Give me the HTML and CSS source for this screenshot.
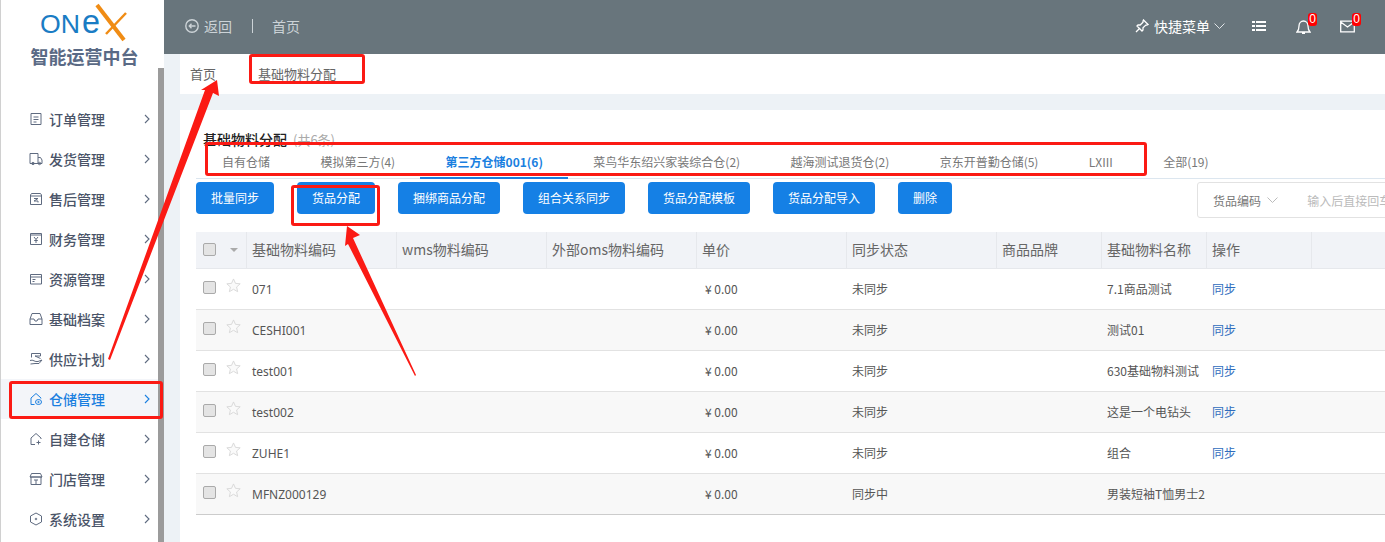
FILE: index.html
```html
<!DOCTYPE html>
<html lang="zh-CN">
<head>
<meta charset="utf-8">
<title>基础物料分配</title>
<link rel="stylesheet" href="styles.css">
</head>
<body>
<div class="app">
  <aside class="sidebar">
    <div class="side-main">
      <div class="brand">
        <svg class="logo" width="100" height="38" viewBox="0 0 100 38">
          <text x="0" y="29" class="logo-text" textLength="40" lengthAdjust="spacingAndGlyphs">ON</text>
          <text x="42" y="29" class="logo-text logo-e" textLength="18" lengthAdjust="spacingAndGlyphs">e</text>
          <path d="M57 1 L84 36" stroke="#f08c14" stroke-width="4" fill="none"/>
          <path d="M86 9 L66 30" stroke="#f08c14" stroke-width="2.500" fill="none"/>
        </svg>
        <div class="brand-name">智能运营中台</div>
      </div>
      <nav class="nav">
        <a class="nav-item"><svg class="ni" viewBox="0 0 14 14"><path d="M2 1.500h10v11H2zM4.500 5h5M4.500 7.500h5M4.500 10h3"/></svg><span>订单管理</span><svg class="chev" viewBox="0 0 6 10"><path d="M1 1l4 4-4 4"/></svg></a>
        <a class="nav-item"><svg class="ni" viewBox="0 0 14 14"><path d="M1 1.500h8v10H1zM9 5.500h2.500l1.500 2.500v3.500H9"/><circle cx="4" cy="11.500" r="1.200"/><circle cx="10.500" cy="11.500" r="1.200"/></svg><span>发货管理</span><svg class="chev" viewBox="0 0 6 10"><path d="M1 1l4 4-4 4"/></svg></a>
        <a class="nav-item"><svg class="ni" viewBox="0 0 14 14"><path d="M1.500 3l1-1.500h9l1 1.500v9.500h-11zM1.500 4h11M5 6.500h4L5 9h4v1.500"/></svg><span>售后管理</span><svg class="chev" viewBox="0 0 6 10"><path d="M1 1l4 4-4 4"/></svg></a>
        <a class="nav-item"><svg class="ni" viewBox="0 0 14 14"><path d="M1.500 1.500h11v11h-11zM1.500 3h11M5 5l2 2.500L9 5M7 7.500V11M5.200 8.500h3.600"/></svg><span>财务管理</span><svg class="chev" viewBox="0 0 6 10"><path d="M1 1l4 4-4 4"/></svg></a>
        <a class="nav-item"><svg class="ni" viewBox="0 0 14 14"><path d="M1.500 2.500h11v9.500h-11zM1.500 5h11M3.500 7.500h3M3.500 9.500h2"/></svg><span>资源管理</span><svg class="chev" viewBox="0 0 6 10"><path d="M1 1l4 4-4 4"/></svg></a>
        <a class="nav-item"><svg class="ni" viewBox="0 0 14 14"><path d="M1 7l2-5.500h8L13 7v5.500H1zM1 7h4l1 2h2l1-2h4"/></svg><span>基础档案</span><svg class="chev" viewBox="0 0 6 10"><path d="M1 1l4 4-4 4"/></svg></a>
        <a class="nav-item"><svg class="ni" viewBox="0 0 14 14"><path d="M2.500 5.500v-4h9V4H6l5.500 2.500M1 8.500c3-1.500 5 2 8 1l4-1.500-3 3.500H6L1.500 12"/></svg><span>供应计划</span><svg class="chev" viewBox="0 0 6 10"><path d="M1 1l4 4-4 4"/></svg></a>
        <a class="nav-item active"><svg class="ni" viewBox="0 0 14 14"><path d="M5.500 12.500H2V6L7 1.500 12 6v.5"/><ellipse cx="9.500" cy="10" rx="3" ry="2.500"/><circle cx="9.500" cy="10" r=".7"/></svg><span>仓储管理</span><svg class="chev" viewBox="0 0 6 10"><path d="M1 1l4 4-4 4"/></svg></a>
        <a class="nav-item"><svg class="ni" viewBox="0 0 14 14"><path d="M6 12.500H2V6L7 1.500 12 6v1M9.500 8.500v4M7.500 10.500h4"/></svg><span>自建仓储</span><svg class="chev" viewBox="0 0 6 10"><path d="M1 1l4 4-4 4"/></svg></a>
        <a class="nav-item"><svg class="ni" viewBox="0 0 14 14"><path d="M2 5v7.500h10V5M2.500 1.500h9L13 5H1zM1 5h12M5 8h4M7 8v4.500"/></svg><span>门店管理</span><svg class="chev" viewBox="0 0 6 10"><path d="M1 1l4 4-4 4"/></svg></a>
        <a class="nav-item"><svg class="ni" viewBox="0 0 14 14"><path d="M7 1l5.500 3v6L7 13l-5.500-3V4z"/><circle cx="7" cy="7" r=".8"/></svg><span>系统设置</span><svg class="chev" viewBox="0 0 6 10"><path d="M1 1l4 4-4 4"/></svg></a>
      </nav>
    </div>
    <div class="side-scroll"></div>
  </aside>

  <div class="main">
    <header class="topbar">
      <svg class="top-back" viewBox="0 0 14 14"><circle cx="7" cy="7" r="6.200"/><path d="M10.500 7h-6M6.500 4.800L4.300 7l2.200 2.200"/></svg>
      <span class="top-link">返回</span>
      <span class="top-sep"></span>
      <span class="top-link">首页</span>
      <div class="top-right">
        <svg class="ti pin" viewBox="0 0 14 14"><path d="M8.500 1l4.500 4.500-1.200.6-1 0L8 8.800 8 11 7 12 2 7l1-1h2.200L8 3.300V2.200zM4.500 9.500L1 13"/></svg>
        <span class="quick">快捷菜单</span>
        <svg class="ti quick-chev" viewBox="0 0 11 6"><path d="M.5.500l5 5 5-5"/></svg>
        <svg class="ti list" viewBox="0 0 14 12"><path class="solid" d="M0 1h3v2H0zM4 1h10v2H4zM0 5h3v2H0zM4 5h10v2H4zM0 9h3v2H0zM4 9h10v2H4z"/></svg>
        <span class="bell-wrap">
          <svg class="ti bell" viewBox="0 0 15 15"><path d="M1 13h13c-1.500-1.500-2-3-2-6 0-3-2-5-4.500-5S3 4 3 7c0 3-.5 4.500-2 6zM6 14.500h3"/></svg>
          <b class="badge">0</b>
        </span>
        <span class="bell-wrap mail-wrap">
          <svg class="ti mail" viewBox="0 0 15 12"><path d="M.7.700h13.600v10.600H.7zM.7 1.500l6.800 5 6.800-5"/></svg>
          <b class="badge">0</b>
        </span>
      </div>
    </header>

    <div class="pagetabs">
      <span class="pt pt-home">首页</span>
      <span class="pt">基础物料分配</span>
    </div>

    <section class="card">
      <div class="card-head"><strong>基础物料分配</strong><em>(共6条)</em></div>
      <div class="tabs">
        <span class="tab">自有仓储</span>
        <span class="tab">模拟第三方(4)</span>
        <span class="tab current">第三方仓储001(6)</span>
        <span class="tab">菜鸟华东绍兴家装综合仓(2)</span>
        <span class="tab">越海测试退货仓(2)</span>
        <span class="tab">京东开普勤仓储(5)</span>
        <span class="tab">LXIII</span>
        <span class="tab">全部(19)</span>
      </div>
      <div class="toolbar">
        <button class="btn">批量同步</button>
        <button class="btn">货品分配</button>
        <button class="btn">捆绑商品分配</button>
        <button class="btn">组合关系同步</button>
        <button class="btn">货品分配模板</button>
        <button class="btn">货品分配导入</button>
        <button class="btn">删除</button>
        <div class="search">
          <span class="search-key">货品编码</span>
          <svg class="search-chev" viewBox="0 0 11 6"><path d="M.5.500l5 5 5-5"/></svg>
          <span class="search-ph">输入后直接回车</span>
        </div>
      </div>
      <div class="table">
        <div class="tr th">
          <div class="c c-sel"><i class="cb"></i><svg class="sort" viewBox="0 0 8 4"><path d="M0 0h8L4 4z"/></svg></div>
          <div class="c">基础物料编码</div><div class="c">wms物料编码</div><div class="c">外部oms物料编码</div><div class="c">单价</div><div class="c">同步状态</div><div class="c">商品品牌</div><div class="c">基础物料名称</div><div class="c">操作</div><div class="c"></div>
        </div>
        <div class="tr">
          <div class="c c-sel"><i class="cb"></i><svg class="star" viewBox="0 0 16 16"><path d="M8 1l2.100 4.700 5 .5-3.800 3.400 1.100 5L8 12l-4.400 2.600 1.100-5L.9 6.200l5-.5z"/></svg></div>
          <div class="c code">071</div><div class="c"></div><div class="c"></div><div class="c price">¥ 0.00</div><div class="c">未同步</div><div class="c"></div><div class="c">7.1商品测试</div><div class="c link">同步</div><div class="c"></div>
        </div>
        <div class="tr">
          <div class="c c-sel"><i class="cb"></i><svg class="star" viewBox="0 0 16 16"><path d="M8 1l2.100 4.700 5 .5-3.800 3.400 1.100 5L8 12l-4.400 2.600 1.100-5L.9 6.200l5-.5z"/></svg></div>
          <div class="c code">CESHI001</div><div class="c"></div><div class="c"></div><div class="c price">¥ 0.00</div><div class="c">未同步</div><div class="c"></div><div class="c">测试01</div><div class="c link">同步</div><div class="c"></div>
        </div>
        <div class="tr">
          <div class="c c-sel"><i class="cb"></i><svg class="star" viewBox="0 0 16 16"><path d="M8 1l2.100 4.700 5 .5-3.800 3.400 1.100 5L8 12l-4.400 2.600 1.100-5L.9 6.200l5-.5z"/></svg></div>
          <div class="c code">test001</div><div class="c"></div><div class="c"></div><div class="c price">¥ 0.00</div><div class="c">未同步</div><div class="c"></div><div class="c">630基础物料测试</div><div class="c link">同步</div><div class="c"></div>
        </div>
        <div class="tr">
          <div class="c c-sel"><i class="cb"></i><svg class="star" viewBox="0 0 16 16"><path d="M8 1l2.100 4.700 5 .5-3.800 3.400 1.100 5L8 12l-4.400 2.600 1.100-5L.9 6.200l5-.5z"/></svg></div>
          <div class="c code">test002</div><div class="c"></div><div class="c"></div><div class="c price">¥ 0.00</div><div class="c">未同步</div><div class="c"></div><div class="c">这是一个电钻头</div><div class="c link">同步</div><div class="c"></div>
        </div>
        <div class="tr">
          <div class="c c-sel"><i class="cb"></i><svg class="star" viewBox="0 0 16 16"><path d="M8 1l2.100 4.700 5 .5-3.800 3.400 1.100 5L8 12l-4.400 2.600 1.100-5L.9 6.200l5-.5z"/></svg></div>
          <div class="c code">ZUHE1</div><div class="c"></div><div class="c"></div><div class="c price">¥ 0.00</div><div class="c">未同步</div><div class="c"></div><div class="c">组合</div><div class="c link">同步</div><div class="c"></div>
        </div>
        <div class="tr">
          <div class="c c-sel"><i class="cb"></i><svg class="star" viewBox="0 0 16 16"><path d="M8 1l2.100 4.700 5 .5-3.800 3.400 1.100 5L8 12l-4.400 2.600 1.100-5L.9 6.200l5-.5z"/></svg></div>
          <div class="c code">MFNZ000129</div><div class="c"></div><div class="c"></div><div class="c price">¥ 0.00</div><div class="c">同步中</div><div class="c"></div><div class="c nowrap">男装短袖T恤男士2</div><div class="c link"></div><div class="c"></div>
        </div>
      </div>
    </section>
  </div>
</div>

<div class="mark mark-tab"></div>
<div class="mark mark-tabs"></div>
<div class="mark mark-btn"></div>
<div class="mark mark-nav"></div>
<svg class="arrows" width="1385" height="542" viewBox="0 0 1385 542">
  <path d="M217 80 L219 96 L213 93 L110 360 L108 359 L205 90 L201 90 Z"/>
  <path d="M347 226 L360 235 L353 238 L416 375 L415 376 L348 244 L345 246 Z"/>
</svg>
</body>
</html>
```
FILE: styles.css
```css
* { box-sizing: border-box; }
html, body { margin: 0; padding: 0; width: 1385px; height: 542px; overflow: hidden; }
body { font-family: "Noto Sans", "Noto Sans CJK SC", sans-serif; font-size: 12px; color: #555; background: #edf2f6; position: relative; }
.app { display: flex; width: 1385px; height: 542px; }

.sidebar { width: 164px; flex: none; display: flex; background: #fff; border-left: 1px solid #d0d0d0; }
.side-main { flex: 1; min-width: 0; }
.side-scroll { width: 6px; margin-top: 68px; background: #9b9b9b; }
.brand { height: 99px; display: flex; flex-direction: column; align-items: center; padding-top: 4px; }
.logo { display: block; margin-left: 20px; overflow: visible; }
.logo-text { font-family: "Liberation Sans", sans-serif; font-size: 25px; fill: #1a7cc4; }
.logo-e { font-size: 33px; }
.brand-name { font-family: "Noto Sans CJK SC", sans-serif; font-size: 18px; font-weight: 700; line-height: 24px; color: #5a6a85; margin-top: 2px; margin-left: 10px; }
.nav { display: flex; flex-direction: column; }
.nav-item { height: 40px; display: flex; align-items: center; padding-left: 28px; font-family: "Noto Sans CJK SC", sans-serif; font-size: 14px; font-weight: 500; color: #4a5468; }
.nav-item span { width: 56px; margin-left: 6px; white-space: nowrap; }
.ni { width: 14px; height: 14px; fill: none; stroke: #5f6b80; stroke-width: 1; }
.chev { width: 6px; height: 10px; margin-left: 39px; fill: none; stroke: #5f6b80; stroke-width: 1.100; }
.nav-item.active { background: #f3f5f9; color: #1a7fe0; }
.nav-item.active .ni, .nav-item.active .chev { stroke: #1a7fe0; }

.main { flex: 1; min-width: 0; display: flex; flex-direction: column; }
.topbar { height: 54px; flex: none; background: #68757c; display: flex; align-items: center; padding: 0 0 2px 21px; color: #ccd3d7; font-family: "Noto Sans CJK SC", sans-serif; font-size: 14px; }
.top-back { width: 14px; height: 14px; fill: none; stroke: #ccd3d7; stroke-width: 1.400; margin-right: 5px; }
.top-sep { width: 1px; height: 14px; background: #ccd3d7; margin: 0 20px 0 20px; }
.top-link:last-of-type { margin-left: -1px; }
.top-right { margin-left: auto; display: flex; align-items: center; color: #fff; padding-right: 30px; }
.ti { fill: none; stroke: #fff; stroke-width: 1.300; flex: none; }
.pin { width: 14px; height: 14px; margin-right: 5px; }
.quick { width: 56px; white-space: nowrap; }
.quick-chev { width: 11px; height: 6px; margin-left: 4px; margin-right: 27px; stroke: #dfe4e7; stroke-width: 1; }
.list { width: 14px; height: 12px; margin-right: 30px; }
.solid { fill: #fff; stroke: none; }
.bell-wrap { position: relative; display: block; width: 15px; height: 15px; margin-right: 29px; }
.mail-wrap { margin-right: 0; }
.bell { display: block; width: 15px; height: 15px; }
.mail { display: block; width: 15px; height: 13px; margin-top: 1px; }
.badge { position: absolute; left: 12px; top: -6px; width: 9px; height: 13px; background: #f00; border-radius: 3px; color: #fff; font: 400 12px/13px "Liberation Sans", sans-serif; text-align: center; }

.pagetabs { height: 40px; flex: none; margin-left: 16px; background: #fff; display: flex; align-items: center; padding: 0 0 2px 10px; font-family: "Noto Sans CJK SC", sans-serif; font-size: 13px; color: #666; }
.pt-home { margin-right: 42px; }

.card { flex: 1; margin: 16px 0 0 16px; background: #fff; padding: 17px 0 0 16px; overflow: hidden; min-width: 0; }
.card-head { height: 24px; padding-left: 7px; line-height: 24px; font-family: "Noto Sans CJK SC", sans-serif; white-space: nowrap; }
.card-head strong { font-size: 14px; font-weight: 500; color: #222; }
.card-head em { font-style: normal; font-size: 13px; color: #aaa; margin-left: 6px; }
.tabs { height: 29px; display: flex; border-bottom: 1px solid #dce6ef; font-family: "Noto Sans CJK SC", sans-serif; white-space: nowrap; color: #777; margin-top: -1px; }
.tab { padding: 0 25.200px; height: 29px; line-height: 23px; flex: none; }
.tab:first-child { padding-left: 26px; }
.tab.current { color: #1a7fe0; font-weight: 700; border-bottom: 2px solid #1a7fe0; }
.toolbar { margin-top: 3px; height: 36px; display: flex; gap: 23px; align-items: flex-start; white-space: nowrap; }
.btn { height: 32px; padding: 0 15px 2px; border: 0; border-radius: 4px; background: #1580e5; color: #fff; font-family: "Noto Sans CJK SC", sans-serif; font-size: 12px; flex: none; }
.search { margin-left: 222px; flex: none; width: 240px; height: 36px; border: 1px solid #e2e2e2; border-radius: 3px; display: flex; align-items: center; padding: 0 0 0 15px; font-family: "Noto Sans CJK SC", sans-serif; color: #777; }
.search-chev { width: 11px; height: 6px; margin: 0 0 0 6px; fill: none; stroke: #bbb; }
.search-ph { color: #bbb; margin-left: 29px; }

.table { margin-top: 14px; width: 1189px; }
.tr { display: grid; grid-template-columns: 51px 150px 150px 150px 150px 150px 105px 105px 105px 1fr; height: 41px; border-bottom: 1px solid #e2e2e2; align-items: center; color: #555; }
.tr:nth-child(odd) { background: #f8f8f8; }
.tr:last-child { border-bottom-color: #ccc; }
.tr.th { height: 37px; background: #f1f3f7; font-size: 14px; color: #666; border-bottom-color: #e6e8ec; align-items: stretch; }
.th .c { border-right: 1px solid #e6e8ec; line-height: 34px; height: 36px; }
.th .c:last-child { border-right: 0; }
.c { padding: 0 0 2px 5px; white-space: nowrap; min-width: 0; font-family: "Noto Sans CJK SC", "Noto Sans", sans-serif; }
.c-sel { padding: 0 0 0 7px; display: flex; align-items: center; gap: 11px; }
.th .c-sel { gap: 14px; }
.cb { display: block; width: 13px; height: 13px; border: 1px solid #aaa; border-radius: 2px; background: #e4e4e4; margin-top: -4px; flex: none; }
.th .cb { margin-top: -2px; }
.sort { width: 8px; height: 4px; fill: #aaa; }
.star { width: 15px; height: 15px; fill: #fafafa; stroke: #d8d8d8; margin-top: -7px; margin-left: -1px; flex: none; }
.code { font-family: "Noto Sans", sans-serif; font-size: 12px; padding-bottom: 0; }
.price { padding-left: 8px; }
.link { color: #2f6cbd; }
.nowrap { overflow: visible; }

.mark { position: absolute; border: 3px solid #fb1a14; border-radius: 3px; pointer-events: none; }
.mark-tab { left: 249px; top: 54px; width: 116px; height: 30px; }
.mark-tabs { left: 205px; top: 142px; width: 942px; height: 34px; }
.mark-btn { left: 291px; top: 185px; width: 89px; height: 41px; }
.mark-nav { left: 9px; top: 381px; width: 154px; height: 38px; }
.arrows { position: absolute; left: 0; top: 0; pointer-events: none; }
.arrows path { fill: #fb1a14; }
```
